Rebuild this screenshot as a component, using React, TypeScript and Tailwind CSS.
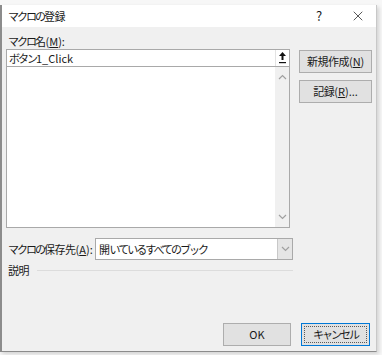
import { X } from "lucide-react";

const FONT = { fontFamily: '"Noto Sans CJK JP", "Noto Sans", sans-serif' };

// Noto's full-width glyphs are wider than the UI font in the picture:
// pull kana in hard, kanji only a little
const J = ({ children }: { children: string }) => (
  <>
    {Array.from(children).map((ch, i) => (
      <span
        key={i}
        className={
          /[\u4e00-\u9fff]/.test(ch) ? "tracking-[-0.5px]" : "tracking-[-2px]"
        }
      >
        {ch}
      </span>
    ))}
  </>
);

const RefEditIcon = () => (
  <svg width="9" height="12" viewBox="0 0 9 12">
    <path d="M4.5 0 L8 4 L5.5 4 L5.5 8 L3.5 8 L3.5 4 L1 4 Z" fill="#111" />
    <rect x="1" y="10" width="7" height="1.2" fill="#111" />
  </svg>
);

const Chevron = ({ up = false }: { up?: boolean }) => (
  <svg width="9" height="6" viewBox="0 0 9 6">
    <path
      d={up ? "M1 5 L4.5 1.5 L8 5" : "M1 1 L4.5 4.5 L8 1"}
      fill="none"
      stroke="#a0a0a0"
      strokeWidth="1.2"
    />
  </svg>
);

const DialogButton = ({
  label,
  focused = false,
}: {
  label: React.ReactNode;
  focused?: boolean;
}) => (
  <div
    className={`flex h-[23px] items-center justify-center whitespace-nowrap border bg-[#e1e1e1] text-[11px] text-[#1a1a1a] ${
      focused ? "border-[#0078d7] p-[2px]" : "border-[#adadad]"
    }`}
  >
    {focused ? (
      <div className="flex h-full w-full items-center justify-center border border-dotted border-[#5a5a5a]">
        {label}
      </div>
    ) : (
      label
    )}
  </div>
);

export default function App() {
  return (
    <div
      className="h-[355px] w-[382px] overflow-hidden bg-[#f7f7f7]"
      style={FONT}
    >
      <div className="mt-[5px] flex h-[347px] w-[377px] flex-col border-l-2 border-b border-r border-[#8c8c8c] border-r-[#c8c8c8] shadow-[2px_2px_4px_rgba(0,0,0,0.15)]">
        {/* title bar */}
        <div className="flex h-[22px] items-center bg-white pl-[6px]">
          <span className="flex-1 text-[11px] text-[#1a1a1a]">
            <J>マクロの登録</J>
          </span>
          <span className="w-[14px] text-center text-[13px] text-[#1a1a1a]">?</span>
          <span className="ml-[24px] mr-[10px] flex w-[16px] items-center justify-center">
            <X size={16} strokeWidth={1.1} color="#1a1a1a" />
          </span>
        </div>

        {/* body */}
        <div className="flex flex-1 flex-col bg-[#f0f0f0] pl-[4px] pr-[4px] text-[11px] text-[#1a1a1a]">
          <div className="flex gap-[9px]">
            <div className="flex w-[285px] flex-col">
              <div className="mt-[7px] h-[15px] pl-[2px] leading-[15px]">
                <J>マクロ名</J>(<span className="underline">M</span>):
              </div>
              <div className="flex h-[18px] border border-[#a9a9a9] bg-white">
                <span className="flex-1 pl-[2px] leading-[16px]">
                  <J>ボタン</J>1_Click
                </span>
                <span className="flex w-[14px] items-center justify-center border-l border-[#e3e3e3]">
                  <RefEditIcon />
                </span>
              </div>
              <div className="flex h-[161px] border border-t-0 border-[#a9a9a9] bg-white">
                <div className="flex-1" />
                <div className="flex w-[14px] flex-col items-center justify-between bg-[#f0f0f0] py-[7px]">
                  <Chevron up />
                  <Chevron />
                </div>
              </div>
            </div>
            <div className="mt-[23px] flex w-[73px] flex-col gap-[7px]">
              <DialogButton
                label={
                  <span>
                    <J>新規作成</J>(<span className="underline">N</span>)
                  </span>
                }
              />
              <DialogButton
                label={
                  <span>
                    <J>記録</J>(<span className="underline">R</span>)...
                  </span>
                }
              />
            </div>
          </div>

          <div className="mt-[10px] flex w-[287px] items-center">
            <span className="w-[89px] whitespace-nowrap pl-[2px]">
              <J>マクロの保存先</J>(<span className="underline">A</span>):
            </span>
            <div className="flex h-[22px] flex-1 border border-[#a9a9a9] bg-white">
              <span className="flex-1 pl-[3px] leading-[20px]">
                <J>開いているすべてのブック</J>
              </span>
              <span className="flex w-[15px] items-center justify-center border-l border-[#c8c8c8] bg-[#e5e5e5]">
                <Chevron />
              </span>
            </div>
          </div>

          <div className="mt-[2px] flex w-[287px] items-center gap-[8px]">
            <span className="pl-[2px] leading-[16px]">
              <J>説明</J>
            </span>
            <div className="h-px flex-1 bg-[#dcdcdc]" />
          </div>

          <div className="mt-auto mb-[5px] flex justify-end gap-[10px] pr-[2px]">
            <div className="w-[68px]">
              <DialogButton label="OK" />
            </div>
            <div className="w-[69px]">
              <DialogButton label={<J>キャンセル</J>} focused />
            </div>
          </div>
        </div>
      </div>
    </div>
  );
}
